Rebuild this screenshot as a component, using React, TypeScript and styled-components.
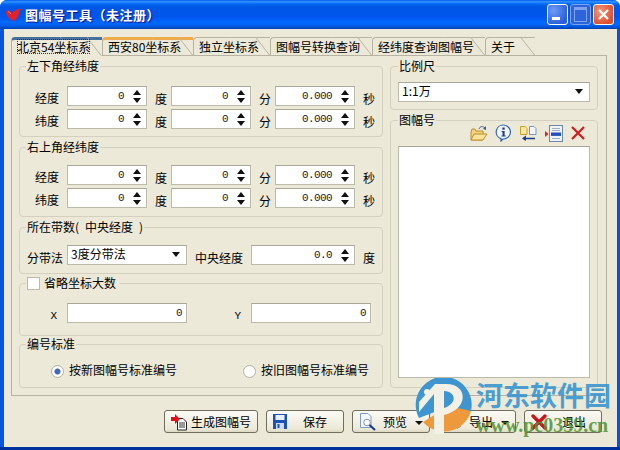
import { FC, ReactNode } from "react";
import styled, { createGlobalStyle } from "styled-components";

const GlobalStyle = createGlobalStyle`
  html, body {
    margin: 0;
    padding: 0;
    overflow: hidden;
    background: #fff;
  }
  * {
    box-sizing: border-box;
  }
`;

const AppIcon = () => (
  <svg width="17" height="14" viewBox="0 0 17 14">
    <path d="M1 4 C2 1 5 2 7 5 C9 3 12 0 16 1 C15 3 14 3 14 5 C14 9 10 13 8 13 C5 11 1 8 1 4 Z" fill="#e0202a" />
    <path d="M3 4 C4 3 5 5 6 6" stroke="#ff8a80" strokeWidth="1" fill="none" />
  </svg>
);

const FolderIcon = () => (
  <svg width="18" height="17" viewBox="0 0 18 17">
    <path d="M1 7 L1 15 L13 15 L13 6 L6 6 L5 4 L2 4 Z" fill="#f3d27a" stroke="#b8902e" />
    <path d="M1 15 L4 9 L17 9 L13 15 Z" fill="#fbe49a" stroke="#b8902e" />
    <path d="M9 4 C10 1 13 1 15 3" stroke="#44608c" fill="none" />
    <path d="M16 1 L16 5 L13 4 Z" fill="#44608c" />
  </svg>
);

const InfoIcon = () => (
  <svg width="17" height="18" viewBox="0 0 17 18">
    <path d="M8.5 1 A7.2 7 0 1 1 8 15 L6 17 L6 14.6 A7.2 7 0 0 1 8.5 1 Z" fill="#f0f4fb" stroke="#2a5fa8" strokeWidth="1.2" />
    <rect x="7.3" y="3.5" width="2.4" height="2.2" fill="#1c3f88" />
    <path d="M6.5 7 H9.6 V11.5 H10.6 V12.6 H6.5 V11.5 H7.5 V8 H6.5 Z" fill="#1c3f88" />
  </svg>
);

const SwapIcon = () => (
  <svg width="19" height="17" viewBox="0 0 19 17">
    <path d="M1.5 1.5 H6 L8 3.5 V9.5 H1.5 Z" fill="#ffe9a0" stroke="#c8a02a" />
    <path d="M10.5 1.5 H15 L17 3.5 V9.5 H10.5 Z" fill="#f2f5fb" stroke="#7a95c0" />
    <path d="M4 13.5 H16" stroke="#1c3f88" strokeWidth="1.4" />
    <path d="M7 10.5 L3 13.5 L7 16 Z" fill="#1c3f88" />
  </svg>
);

const ListIcon = () => (
  <svg width="18" height="17" viewBox="0 0 18 17">
    <rect x="4.5" y="0.5" width="13" height="16" fill="#eef1f5" stroke="#6c8aa6" />
    <path d="M7 3.5 H15 M7 5.5 H15 M7 13.5 H15" stroke="#9fb0c2" />
    <rect x="6" y="7.5" width="10" height="3.4" fill="#2050b8" />
    <path d="M0 6 L3.5 9 L0 12 Z" fill="#d8242a" />
  </svg>
);

const RedCross: FC<{ size: number }> = ({ size }) => (
  <svg width={size} height={size} viewBox="0 0 16 16">
    <path d="M2 2 L14 14 M14 2 L2 14" stroke="#d01c1c" strokeWidth="2.2" />
  </svg>
);

const GenerateIcon = () => (
  <svg width="17" height="18" viewBox="0 0 17 18">
    <path d="M6.5 5.5 H12 L15.5 9 V17 H6.5 Z" fill="#fff" stroke="#222" />
    <path d="M8 10 H14 M8 12 H14 M8 14 H14" stroke="#333" />
    <path d="M0 4 H4 V1 L9 6 L4 11 V8 H0 Z" fill="#e2101c" />
  </svg>
);

const FloppyIcon = () => (
  <svg width="14" height="15" viewBox="0 0 14 15">
    <rect width="14" height="15" fill="#1c52b4" />
    <rect x="2.5" y="1" width="9" height="5" fill="#e8eefa" />
    <rect x="3" y="9" width="8" height="6" fill="#cfdaf0" />
    <rect x="4.5" y="10" width="2" height="4" fill="#1c52b4" />
  </svg>
);

const PreviewIcon = () => (
  <svg width="18" height="19" viewBox="0 0 18 19">
    <path d="M1.5 1.5 H9 L12 4.5 V15.5 H1.5 Z" fill="#f3f6fb" stroke="#7d9cc4" />
    <circle cx="8" cy="10.5" r="3.3" fill="#f8fbff" stroke="#8a94a4" />
    <path d="M10.5 13 L16 18" stroke="#1c3c90" strokeWidth="2.2" />
  </svg>
);

const ExportIcon = () => (
  <svg width="18" height="19" viewBox="0 0 18 19">
    <path d="M1.5 1.5 H7 L9 3.5 V10 H1.5 Z" fill="#f7f7f2" stroke="#a8a8a0" />
    <path d="M10.5 1.5 H14 L16 3.5 V10 H10.5 Z" fill="#ffe9a0" stroke="#c8a02a" />
    <path d="M3 14.5 H13" stroke="#5a90d0" strokeWidth="1.4" />
    <path d="M12 11.5 L16 14.5 L12 17 Z" fill="#5a90d0" />
  </svg>
);

const ExitIcon = () => (
  <svg width="16" height="16" viewBox="0 0 16 16">
    <path d="M2 2 L14 14 M14 2 L2 14" stroke="#c8141c" strokeWidth="3.4" strokeLinecap="round" />
  </svg>
);

const WatermarkLogo = () => (
  <svg width="58" height="58" viewBox="0 0 58 58">
    <path d="M4 40 A28 28 0 1 1 56 33 L30 30 Z" fill="#3f95cf" />
    <path d="M8 44 A28 28 0 0 0 56 33 L34 28 Z" fill="#ee9a3c" />
    <path d="M4 34 L19 16 L19 56 L29 56 L29 6 L20 6 L4 24 Z" fill="#f3f1e6" />
    <path d="M29 6 C52 4 56 30 29 37 L29 30 C42 26 42 14 29 13 Z" fill="#f3f1e6" />
    <circle cx="12" cy="14" r="3" fill="#f3f1e6" />
  </svg>
);

const Spin: FC<{ value: string; width: number }> = ({ value, width }) => (
  <SpinBox $w={width}>
    <BoxValue>{value}</BoxValue>
    <SpinArrows>
      <ArrowUp />
      <ArrowDown />
    </SpinArrows>
  </SpinBox>
);

const CoordRow: FC<{ label: string }> = ({ label }) => (
  <Row>
    <RowLabel>{label}</RowLabel>
    <Spin value="0" width={80} />
    <Unit>度</Unit>
    <Spin value="0" width={80} />
    <Unit>分</Unit>
    <Spin value="0.000" width={80} />
    <Unit>秒</Unit>
  </Row>
);

const ActionButton: FC<{ icon: ReactNode; text: string; gap: number; width?: number; caret?: boolean }> = ({
  icon,
  text,
  gap,
  width = 78,
  caret,
}) => (
  <Button $gap={gap} $w={width}>
    {icon}
    <span>{text}</span>
    {caret && <ButtonCaret />}
  </Button>
);

const tabs = [
  { text: "北京54坐标系", width: 91, strip: "#47709f", active: true },
  { text: "西安80坐标系", width: 91, strip: "#eeab4c" },
  { text: "独立坐标系", width: 77 },
  { text: "图幅号转换查询", width: 102 },
  { text: "经纬度查询图幅号", width: 113 },
  { text: "关于", width: 50 },
];

export default function App() {
  return (
    <>
      <GlobalStyle />
      <Window>
        <TitleBar>
          <AppIcon />
          <TitleText>图幅号工具（未注册）</TitleText>
          <WindowButtons>
            <MinButton />
            <MaxButton />
            <CloseButton>
              <svg width="13" height="13" viewBox="0 0 13 13">
                <path d="M2 2 L11 11 M11 2 L2 11" stroke="#fff" strokeWidth="2.2" />
              </svg>
            </CloseButton>
          </WindowButtons>
        </TitleBar>
        <Client>
          <TabRow>
            {tabs.map((tab) => (
              <Tab key={tab.text} $w={tab.width} $strip={tab.strip} $active={tab.active}>
                <TabText $active={tab.active} $strip={tab.strip}>
                  {tab.text}
                </TabText>
              </Tab>
            ))}
          </TabRow>
          <TabPanel>
            <LeftColumn>
              <Group $h={79}>
                <GroupTitle>左下角经纬度</GroupTitle>
                <CoordRows $top={12}>
                  <CoordRow label="经度" />
                  <CoordRow label="纬度" />
                </CoordRows>
              </Group>
              <Group $h={78} $mt={2}>
                <GroupTitle>右上角经纬度</GroupTitle>
                <CoordRows $top={10}>
                  <CoordRow label="经度" />
                  <CoordRow label="纬度" />
                </CoordRows>
              </Group>
              <Group $h={55} $mt={2}>
                <GroupTitle>所在带数(&ensp;中央经度&ensp;)</GroupTitle>
                <ZoneRow>
                  <FieldLabel>分带法</FieldLabel>
                  <Select $w={120}>
                    3度分带法
                    <SelectArrow />
                  </Select>
                  <FieldLabel $ml={8}>中央经度</FieldLabel>
                  <ZoneSpin>
                    <Spin value="0.0" width={104} />
                  </ZoneSpin>
                  <Unit>度</Unit>
                </ZoneRow>
              </Group>
              <Group $h={61} $mt={1}>
                <CheckTitle>
                  <Checkbox />
                  省略坐标大数
                </CheckTitle>
                <AxisRow>
                  <AxisLabel $w={40}>X</AxisLabel>
                  <PlainInput>
                    <PlainValue>0</PlainValue>
                  </PlainInput>
                  <AxisLabel $w={64}>Y</AxisLabel>
                  <PlainInput>
                    <PlainValue>0</PlainValue>
                  </PlainInput>
                </AxisRow>
              </Group>
              <Group $h={52}>
                <GroupTitle>编号标准</GroupTitle>
                <RadioRow>
                  <RadioOption>
                    <Radio $checked />
                    按新图幅号标准编号
                  </RadioOption>
                  <RadioOption>
                    <Radio />
                    按旧图幅号标准编号
                  </RadioOption>
                </RadioRow>
              </Group>
            </LeftColumn>
            <RightColumn>
              <Group $h={52}>
                <GroupTitle $right>比例尺</GroupTitle>
                <ScaleRow>
                  <Select $w={192}>
                    1:1万
                    <SelectArrow />
                  </Select>
                </ScaleRow>
              </Group>
              <Group $h={276} $mt={2}>
                <GroupTitle $right>图幅号</GroupTitle>
                <SheetTools>
                  <FolderIcon />
                  <InfoIcon />
                  <SwapIcon />
                  <ListIcon />
                  <RedCross size={16} />
                </SheetTools>
                <SheetList />
              </Group>
            </RightColumn>
          </TabPanel>
          <ButtonBar>
            <ActionButton icon={<GenerateIcon />} text="生成图幅号" gap={3} width={94} />
            <ActionButton icon={<FloppyIcon />} text="保存" gap={16} />
            <ActionButton icon={<PreviewIcon />} text="预览" gap={6} caret />
            <ActionButton icon={<ExportIcon />} text="导出" gap={6} caret />
            <ActionButton icon={<ExitIcon />} text="退出" gap={15} />
          </ButtonBar>
        </Client>
        <Watermark>
          <WatermarkLogo />
          <WatermarkText>
            <WatermarkName>河东软件园</WatermarkName>
            <WatermarkUrl>www.pc0359.cn</WatermarkUrl>
          </WatermarkText>
        </Watermark>
      </Window>
    </>
  );
}

const Window = styled.div`
  position: relative;
  width: 620px;
  height: 450px;
  display: flex;
  flex-direction: column;
  overflow: hidden;
  border-radius: 7px 7px 0 0;
  background: #0855dd;
  border-bottom: 3px solid #00309c;
  font-family: "Noto Sans CJK SC", "Liberation Sans", sans-serif;
  font-size: 12px;
  color: #000;
`;

const TitleBar = styled.div`
  height: 29px;
  flex: none;
  display: flex;
  align-items: center;
  gap: 3px;
  padding: 0 6px 0 5px;
  background: linear-gradient(
    180deg,
    #0058ee 0%,
    #3593ff 6%,
    #127dff 10%,
    #0262ee 16%,
    #0057e5 24%,
    #0055eb 56%,
    #005bf5 66%,
    #026afe 76%,
    #0062ef 86%,
    #0052d6 94%,
    #0040ab 100%
  );
`;

const TitleText = styled.div`
  font-size: 13px;
  font-weight: bold;
  letter-spacing: 0.5px;
  color: #fff;
  text-shadow: 1px 1px 1px #0f1089;
`;

const WindowButtons = styled.div`
  display: flex;
  gap: 2px;
  margin-left: auto;
`;

const WindowButton = styled.div`
  width: 21px;
  height: 21px;
  border: 1px solid #fff;
  border-radius: 3px;
  display: flex;
  align-items: center;
  justify-content: center;
`;

const MinButton = styled(WindowButton)`
  background: radial-gradient(circle at 30% 30%, #6e9cf5, #2b5fdc 75%);
  position: relative;

  &::after {
    content: "";
    position: absolute;
    left: 4px;
    bottom: 4px;
    width: 8px;
    height: 3px;
    background: #fff;
  }
`;

const MaxButton = styled(WindowButton)`
  background: #2d64dc;
  border-color: #7fa2ea;

  &::after {
    content: "";
    width: 11px;
    height: 11px;
    border: 1px solid #7fa2ea;
    border-top-width: 3px;
  }
`;

const CloseButton = styled(WindowButton)`
  background: radial-gradient(circle at 35% 35%, #f09a80, #dc4f2c 75%);
`;

const Client = styled.div`
  flex: 1;
  margin: 0 3px 0 4px;
  padding: 8px 10px 0 7px;
  background: #ece9d8;
  display: flex;
  flex-direction: column;
`;

const TabRow = styled.div`
  display: flex;
  height: 18px;
  flex: none;
`;

const Tab = styled.div<{ $w: number; $strip?: string; $active?: boolean }>`
  position: relative;
  width: ${(p) => p.$w}px;
  height: ${(p) => (p.$active ? 19 : 18)}px;
  padding-left: 5px;
  background: #ece9d8;
  border-left: 1px solid #b6b3a3;
  border-top: ${(p) => (p.$strip ? `3px solid ${p.$strip}` : "1px solid #b6b3a3")};
  border-radius: 4px 0 0 0;
  z-index: ${(p) => (p.$active ? 2 : 1)};

  &::after {
    content: "";
    position: absolute;
    top: ${(p) => (p.$strip ? -3 : -1)}px;
    right: 0;
    bottom: 0;
    width: 26px;
    background: #ece9d8;
    border-top: ${(p) => (p.$strip ? `3px solid ${p.$strip}` : "1px solid #b6b3a3")};
    border-right: 1px solid #b6b3a3;
    transform: skewX(38deg);
    transform-origin: bottom right;
  }
`;

const TabText = styled.span<{ $active?: boolean; $strip?: string }>`
  position: relative;
  z-index: 1;
  top: ${(p) => (p.$strip ? -2 : 0)}px;
  display: inline-block;
  line-height: 15px;
  white-space: nowrap;
  outline: ${(p) => (p.$active ? "1px dotted #333" : "none")};
  outline-offset: -1px;
`;

const TabPanel = styled.div`
  width: 596px;
  height: 341px;
  flex: none;
  padding: 2px 8px 0 7px;
  border: 1px solid #b6b3a3;
  display: flex;
  gap: 7px;
`;

const LeftColumn = styled.div`
  width: 364px;
  display: flex;
  flex-direction: column;
`;

const RightColumn = styled.div`
  width: 208px;
  display: flex;
  flex-direction: column;
`;

const Group = styled.fieldset<{ $h: number; $mt?: number }>`
  height: ${(p) => p.$h}px;
  margin: ${(p) => p.$mt ?? 0}px 0 0;
  padding: 0;
  min-width: 0;
  border: 1px solid #d4d0bf;
  border-radius: 4px;
`;

const GroupTitle = styled.legend<{ $right?: boolean }>`
  margin-left: ${(p) => (p.$right ? 7 : 6)}px;
  padding: 0 1px;
  line-height: 16px;
  white-space: nowrap;
`;

const CheckTitle = styled(GroupTitle)`
  display: flex;
  align-items: center;
  gap: 4px;
  padding-right: 4px;
`;

const Checkbox = styled.span`
  width: 13px;
  height: 13px;
  background: #fff;
  border: 1px solid #bdbaa8;
`;

const CoordRows = styled.div<{ $top: number }>`
  display: flex;
  flex-direction: column;
  gap: 3px;
  padding: ${(p) => p.$top}px 0 0 15px;
`;

const Row = styled.div`
  display: flex;
  align-items: center;
  height: 20px;
`;

const RowLabel = styled.span`
  width: 24px;
  margin-right: 8px;
  padding-top: 3px;
`;

const Unit = styled.span`
  width: 12px;
  margin: 0 4px 0 8px;
  padding-top: 4px;
`;

const InputBox = styled.div`
  height: 20px;
  background: #fff;
  border: 1px solid #bcbaa9;
  border-top-color: #a9a798;
  display: flex;
  align-items: center;
  justify-content: flex-end;
`;

const SpinBox = styled(InputBox)<{ $w: number }>`
  width: ${(p) => p.$w}px;
  padding-right: 5px;
`;

const BoxValue = styled.span`
  font-family: "Liberation Mono", monospace;
  font-size: 11px;
  letter-spacing: -0.6px;
  margin-right: 8px;
  color: #222;
`;

const SpinArrows = styled.div`
  width: 9px;
  display: flex;
  flex-direction: column;
  align-items: center;
  gap: 3px;
`;

const ArrowUp = styled.span`
  width: 0;
  height: 0;
  border-left: 4px solid transparent;
  border-right: 4px solid transparent;
  border-bottom: 5px solid #111;
`;

const ArrowDown = styled.span`
  width: 0;
  height: 0;
  border-left: 4px solid transparent;
  border-right: 4px solid transparent;
  border-top: 5px solid #111;
`;

const ZoneRow = styled.div`
  display: flex;
  align-items: center;
  height: 20px;
  margin-top: 10px;
  padding-left: 7px;
`;

const FieldLabel = styled.span<{ $ml?: number }>`
  margin: 0 4px 0 ${(p) => p.$ml ?? 0}px;
  padding-top: 4px;
  white-space: nowrap;
`;

const ZoneSpin = styled.div`
  margin-left: 4px;
`;

const Select = styled.div<{ $w: number }>`
  width: ${(p) => p.$w}px;
  height: 20px;
  padding: 0 6px 2px 3px;
  background: #fff;
  border: 1px solid #bcbaa9;
  border-top-color: #a9a798;
  display: flex;
  align-items: center;
  justify-content: space-between;
  line-height: 16px;
`;

const SelectArrow = styled.span`
  width: 0;
  height: 0;
  border-left: 4px solid transparent;
  border-right: 4px solid transparent;
  border-top: 5px solid #111;
`;

const AxisRow = styled.div`
  display: flex;
  align-items: center;
  margin-top: 12px;
  padding-left: 7px;
`;

const AxisLabel = styled.span<{ $w: number }>`
  width: ${(p) => p.$w}px;
  padding: 5px 10px 0 0;
  text-align: right;
  font-family: "Liberation Mono", monospace;
  font-size: 11px;
`;

const PlainInput = styled(InputBox)`
  width: 120px;
  padding-right: 4px;
`;

const PlainValue = styled(BoxValue)`
  margin-right: 0;
`;

const RadioRow = styled.div`
  display: flex;
  margin-top: 9px;
  padding-left: 31px;
  gap: 66px;
`;

const RadioOption = styled.label`
  display: flex;
  align-items: center;
  gap: 5px;
  white-space: nowrap;
  line-height: 18px;
`;

const Radio = styled.span<{ $checked?: boolean }>`
  width: 13px;
  height: 13px;
  margin-top: 2px;
  border-radius: 50%;
  border: 1px solid #b3b0a0;
  background: ${(p) => (p.$checked ? "radial-gradient(circle, #3f68b8 0 2.5px, #fff 3.5px)" : "#fff")};
`;

const ScaleRow = styled.div`
  margin-top: 8px;
  padding-left: 7px;
`;

const SheetTools = styled.div`
  display: flex;
  align-items: center;
  justify-content: flex-end;
  height: 18px;
  gap: 7px;
  margin: -4px 0 4px;
  padding-right: 11px;
`;

const SheetList = styled.div`
  width: 192px;
  height: 232px;
  margin-left: 7px;
  background: #fff;
  border: 1px solid #bcbaa9;
  border-top-color: #a9a798;
`;

const ButtonBar = styled.div`
  display: flex;
  justify-content: flex-end;
  gap: 8px;
  margin-top: 14px;
  padding-right: 5px;
`;

const Button = styled.button<{ $gap: number; $w: number }>`
  position: relative;
  width: ${(p) => p.$w}px;
  height: 23px;
  padding: 0 0 0 6px;
  display: flex;
  align-items: center;
  gap: ${(p) => p.$gap}px;
  font: inherit;
  color: #000;
  white-space: nowrap;
  background: linear-gradient(180deg, #fbfaf4 0%, #ece9d8 85%, #dcd8c4 100%);
  border: 1px solid #6f6e5f;
  border-radius: 3px;
`;

const ButtonCaret = styled.span`
  position: absolute;
  right: 6px;
  top: 10px;
  width: 0;
  height: 0;
  border-left: 4px solid transparent;
  border-right: 4px solid transparent;
  border-top: 4px solid #111;
`;

const Watermark = styled.div`
  position: absolute;
  left: 415px;
  top: 378px;
  display: flex;
  gap: 3px;
  pointer-events: none;
`;

const WatermarkText = styled.div`
  display: flex;
  flex-direction: column;
  white-space: nowrap;
`;

const WatermarkName = styled.div`
  font-size: 27px;
  font-weight: bold;
  line-height: 34px;
  color: rgba(52, 148, 208, 0.88);
`;

const WatermarkUrl = styled.div`
  margin-top: 3px;
  font-family: "Liberation Serif", serif;
  font-size: 20px;
  font-weight: bold;
  line-height: 20px;
  color: rgba(76, 146, 50, 0.85);
`;
